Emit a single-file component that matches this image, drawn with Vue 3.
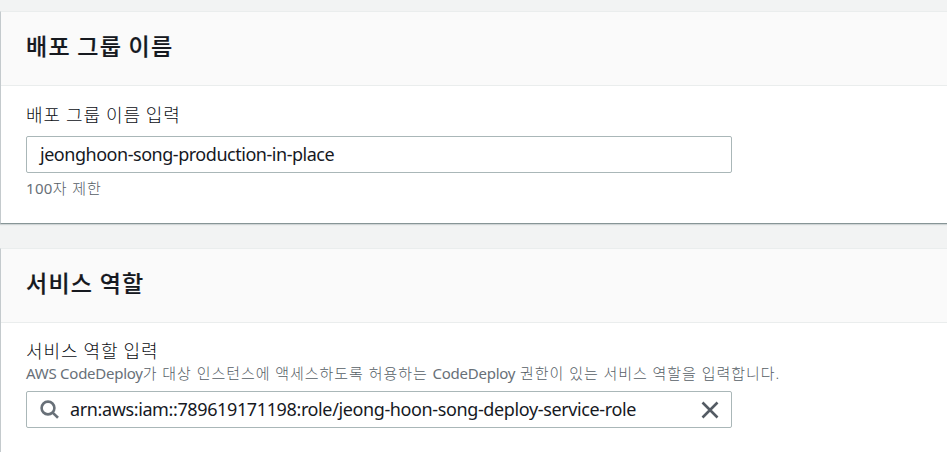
<script setup>
import { ref } from 'vue'
const groupName = ref('jeonghoon-song-production-in-place')
const role = ref('arn:aws:iam::789619171198:role/jeong-hoon-song-deploy-service-role')
</script>

<template>
  <main class="page">
    <section class="card first">
      <header class="head"><h2>배포 그룹 이름</h2></header>
      <div class="body">
        <label class="label">배포 그룹 이름 입력</label>
        <div class="field"><span class="value name">{{ groupName }}</span></div>
        <p class="hint below"><span class="num">100</span>자 제한</p>
      </div>
    </section>
    <section class="card second">
      <header class="head"><h2>서비스 역할</h2></header>
      <div class="body">
        <label class="label">서비스 역할 입력</label>
        <p class="hint"><span class="latin">AWS CodeDeploy</span>가 대상 인스턴스에 액세스하도록 허용하는 <span class="latin">CodeDeploy</span> 권한이 있는 서비스 역할을 입력합니다.</p>
        <div class="field">
          <svg class="mag" viewBox="0 0 20 20"><circle cx="8" cy="8" r="6.4" /><path d="M12.4 12.4L18 17.8" /></svg>
          <span class="value">{{ role }}</span>
          <svg class="close" viewBox="0 0 18 18"><path d="M1.5 1.5L16.5 16.5M16.5 1.5L1.5 16.5" /></svg>
        </div>
      </div>
    </section>
  </main>
</template>

<style>
body { background: #f2f3f3; }
</style>
<style scoped>
.page { height: 452px; overflow: hidden; box-sizing: border-box; padding-top: 11px; background: #f2f3f3; font-family: "Noto Sans", "Noto Sans CJK KR", sans-serif; color: #16191f; }
.card { box-sizing: border-box; background: #fff; border-top: 1px solid #eaeded; border-left: 1px solid #c4cacd; }
.first { height: 213px; border-bottom: 1px solid #879596; box-shadow: 0 1px 1px #d0d5d6; margin-bottom: 24px; }
.second { height: 230px; }
.head { height: 74px; box-sizing: border-box; padding: 16px 25px; background: #fafafa; border-bottom: 1px solid #eaeded; }
h2 { margin: 0; font-size: 23px; line-height: 34px; font-weight: 500; letter-spacing: 1.25px; font-family: "Noto Sans CJK KR", sans-serif; -webkit-text-stroke: 0.2px #16191f; }
.body { padding: 16px 25px; }
.label { display: block; font-size: 18px; line-height: 24px; font-weight: 300; letter-spacing: 0.95px; font-family: "Noto Sans CJK KR", sans-serif; color: #0b0e14; }
.field { width: 706px; height: 37px; box-sizing: border-box; margin-top: 10px; border: 1px solid #aab7b8; border-radius: 2px; padding: 0 13px; display: flex; align-items: center; background: #fff; }
.value { font-size: 18px; line-height: 24px; padding-bottom: 2px; letter-spacing: -0.38px; white-space: nowrap; }
.name { letter-spacing: -0.47px; }
.hint { margin: 0; font-size: 15px; line-height: 22px; color: #565e66; white-space: nowrap; font-weight: 300; letter-spacing: 0.95px; }
.latin { font-weight: 400; color: #687078; letter-spacing: -0.25px; }
.num { font-weight: 400; color: #687078; letter-spacing: 0.3px; }
.below { margin-top: 4px; }
.second .body { padding-top: 15px; }
.second .field { margin-top: 7px; }
.mag { width: 20px; height: 20px; margin-right: 10px; stroke: #687078; }
.close { width: 18px; height: 18px; margin-left: auto; margin-right: -1px; stroke: #545b64; }
svg { fill: none; stroke-width: 2.6; }
</style>
